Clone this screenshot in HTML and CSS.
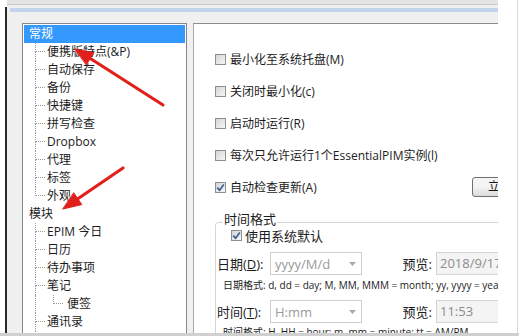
FILE: index.html
```html
<!DOCTYPE html>
<html lang="zh-CN">
<head>
    <meta charset="UTF-8">
    <title>选项</title>
    <link rel="stylesheet" href="styles.css">
</head>
<body>
    <div class="screen">
        <div class="main">
            <div class="edge"></div>
            <div class="rule"></div>
            <div class="window">
                <div class="caption"></div>
                <div class="bar"></div>
                <div class="content">
                    <div class="tree">
                        <div class="row node sel">常规</div>
                        <div class="row leaf"><span class="twig"><i></i><i></i></span>便携版特点(&amp;P)</div>
                        <div class="row leaf"><span class="twig"><i></i><i></i></span>自动保存</div>
                        <div class="row leaf"><span class="twig"><i></i><i></i></span>备份</div>
                        <div class="row leaf"><span class="twig"><i></i><i></i></span>快捷键</div>
                        <div class="row leaf"><span class="twig"><i></i><i></i></span>拼写检查</div>
                        <div class="row leaf"><span class="twig"><i></i><i></i></span>Dropbox</div>
                        <div class="row leaf"><span class="twig"><i></i><i></i></span>代理</div>
                        <div class="row leaf"><span class="twig"><i></i><i></i></span>标签</div>
                        <div class="row leaf"><span class="twig end"><i></i><i></i></span>外观</div>
                        <div class="row node">模块</div>
                        <div class="row leaf"><span class="twig"><i></i><i></i></span>EPIM 今日</div>
                        <div class="row leaf"><span class="twig"><i></i><i></i></span>日历</div>
                        <div class="row leaf"><span class="twig"><i></i><i></i></span>待办事项</div>
                        <div class="row leaf"><span class="twig"><i></i><i></i></span>笔记</div>
                        <div class="row leaf"><span class="pipe"></span><span class="twig end deep"><i></i><i></i></span>便签</div>
                        <div class="row leaf"><span class="twig"><i></i><i></i></span>通讯录</div>
                        <div class="row leaf"><span class="twig"><i></i><i></i></span>密码项</div>
                    </div>

                    <div class="panel">
                        <div class="page">
                            <div class="opt"><span class="box"></span>最小化至系统托盘(M)</div>
                            <div class="opt"><span class="box"></span>关闭时最小化(c)</div>
                            <div class="opt"><span class="box"></span>启动时运行(R)</div>
                            <div class="opt"><span class="box"></span>每次只允许运行1个EssentialPIM实例(l)</div>
                            <div class="opt">
                                <span class="box"><svg width="9" height="9" viewBox="0 0 9 9"><path d="M1.3 4.6 L3.6 7.2 L7.8 1.4" fill="none" stroke="#3e5a8e" stroke-width="1.7"/></svg></span>
                                自动检查更新(A)
                                <button class="btn">立即检查</button>
                            </div>

                            <fieldset class="group">
                                <legend>时间格式</legend>
                                <div class="use">
                                    <span class="box"><svg width="9" height="9" viewBox="0 0 9 9"><path d="M1.3 4.6 L3.6 7.2 L7.8 1.4" fill="none" stroke="#3e5a8e" stroke-width="1.7"/></svg></span>
                                    使用系统默认
                                </div>
                                <div class="field">
                                    <span class="field-label">日期(<u>D</u>):</span>
                                    <span class="combo">yyyy/M/d<svg width="7" height="4" viewBox="0 0 7 4"><path d="M0 0 H7 L3.5 4 Z" fill="#a8a8a8"/></svg></span>
                                    <span class="view-label">预览:</span>
                                    <span class="view">2018/9/17</span>
                                </div>
                                <div class="hint">日期格式: d, dd = day; M, MM, MMM = month; yy, yyyy = year</div>
                                <div class="field time">
                                    <span class="field-label">时间(<u>T</u>):</span>
                                    <span class="combo">H:mm<svg width="7" height="4" viewBox="0 0 7 4"><path d="M0 0 H7 L3.5 4 Z" fill="#a8a8a8"/></svg></span>
                                    <span class="view-label">预览:</span>
                                    <span class="view">11:53</span>
                                </div>
                                <div class="hint last">时间格式: H, HH = hour; m, mm = minute; tt = AM/PM</div>
                            </fieldset>
                        </div>
                    </div>
                </div>
            </div>
            <div class="side"></div>
        </div>
        <div class="bottom"></div>

        <svg class="arrows" width="519" height="336" viewBox="0 0 519 336">
            <g fill="#e1201b" stroke="#e1201b" stroke-linecap="round" stroke-linejoin="round">
                <line x1="163" y1="105" x2="88" y2="57" stroke-width="3.2"/>
                <polygon points="75,49 94,52.8 86.4,64.6" stroke-width="1"/>
                <line x1="123" y1="168" x2="76" y2="200" stroke-width="3.2"/>
                <polygon points="63,209 81.8,204.6 73.9,193" stroke-width="1"/>
            </g>
        </svg>
    </div>
</body>
</html>
```

FILE: styles.css
```css
* {
    margin: 0;
    padding: 0;
    box-sizing: border-box;
}

body {
    width: 519px;
    height: 336px;
    overflow: hidden;
    background: #fff;
    font-family: "Open Sans", "Noto Sans CJK SC", sans-serif;
    font-size: 12px;
    color: #1c1c1c;
}

.screen {
    position: relative;
    width: 519px;
    height: 336px;
    display: flex;
    flex-direction: column;
}

.main {
    flex: 1;
    display: flex;
    min-height: 0;
}

.edge {
    width: 5px;
}

.rule {
    width: 2px;
    margin-top: 7px;
    background: #2a2a2a;
}

.window {
    width: 491px;
    display: flex;
    flex-direction: column;
    background: #f0f0f0;
    overflow: hidden;
}

.caption {
    height: 5px;
    flex-shrink: 0;
    background: #e4e4e4;
    border-bottom: 1px solid #c8c8c8;
}

.bar {
    height: 4px;
    flex-shrink: 0;
    margin: 3px 0 0 3px;
    background: #c2d5ec;
}

.content {
    flex: 1;
    min-height: 0;
    display: flex;
    gap: 6px;
    margin-top: 11px;
    padding-left: 15px;
}

/* tree */

.tree {
    width: 165px;
    flex-shrink: 0;
    background: #fff;
    border: 1px solid #828790;
    border-bottom: none;
    padding: 1px;
    overflow: hidden;
}

.row {
    height: 18px;
    line-height: 18px;
    display: flex;
    white-space: nowrap;
}

.node {
    padding-left: 5px;
}

.node.sel {
    background: #3399ff;
    color: #fff;
}

.leaf {
    padding-left: 11px;
}

.twig {
    width: 10px;
    margin-right: 2px;
    flex-shrink: 0;
    display: flex;
    flex-direction: column;
}

.twig.deep {
    margin-right: 4px;
}

.twig i {
    display: block;
    border-left: 1px dotted #9a9a9a;
}

.twig i:first-child {
    height: 9px;
    border-bottom: 1px dotted #9a9a9a;
}

.twig i:last-child {
    flex: 1;
}

.twig.end i:last-child {
    border-left: none;
}

.pipe {
    width: 18px;
    flex-shrink: 0;
    border-left: 1px dotted #9a9a9a;
}

/* settings panel */

.panel {
    flex: 1;
    background: #fff;
    border-top: 1px solid #8c8c8c;
    border-left: 1px solid #a8a8a8;
    overflow: hidden;
}

.page {
    width: 358px;
    padding: 19px 0 0 21px;
}

.opt {
    height: 32px;
    display: flex;
    align-items: center;
    gap: 4px;
    white-space: nowrap;
}

.box {
    width: 11px;
    height: 11px;
    flex-shrink: 0;
    display: flex;
    align-items: center;
    justify-content: center;
    border: 1px solid #8e8f8f;
    background: linear-gradient(135deg, #d4d4d4, #f7f7f7);
}

.btn {
    margin-left: auto;
    width: 80px;
    height: 20px;
    flex-shrink: 0;
    border: 1px solid #707070;
    border-radius: 3px;
    background: linear-gradient(#f4f4f4 45%, #dcdcdc);
    font: inherit;
    font-size: 12px;
    line-height: 18px;
    color: #1c1c1c;
}

.group {
    margin-top: 9px;
    border: 1px solid #d5d5d5;
    border-radius: 3px;
    padding: 0 0 0 1px;
}

.group legend {
    margin-left: 6px;
    padding: 0 1px 6px;
    line-height: 14px;
    font-size: 13px;
}

.use {
    height: 14px;
    margin-top: -4px;
    padding-left: 14px;
    display: flex;
    align-items: center;
    gap: 3px;
    font-size: 13px;
}

.field {
    height: 23px;
    margin-top: 10px;
    display: flex;
    align-items: center;
    font-size: 13px;
    white-space: nowrap;
}

.field.time {
    margin-top: 8px;
}

.field-label {
    width: 53px;
    flex-shrink: 0;
}

.combo {
    width: 92px;
    height: 23px;
    flex-shrink: 0;
    display: flex;
    align-items: center;
    justify-content: space-between;
    padding: 0 5px 0 4px;
    border: 1px solid #cfcfcf;
    color: #9a9a9a;
}

.view-label {
    width: 74px;
    flex-shrink: 0;
    text-align: right;
    padding-right: 4px;
}

.view {
    width: 110px;
    height: 23px;
    flex-shrink: 0;
    padding-left: 3px;
    line-height: 21px;
    background: #f4f4f4;
    border: 1px solid #d4d4d4;
    color: #8c8c8c;
}

.hint {
    margin-top: 3px;
    padding-left: 6px;
    font-size: 10px;
    line-height: 14px;
    white-space: nowrap;
}

.hint.last {
    margin-top: 2px;
}

.side {
    width: 20px;
    background: #fff;
    border-right: 1px solid #d8d8d8;
}

.bottom {
    height: 3px;
    flex-shrink: 0;
    background: #d0d0d0;
}

.arrows {
    position: absolute;
    left: 0;
    top: 0;
    pointer-events: none;
}
```
